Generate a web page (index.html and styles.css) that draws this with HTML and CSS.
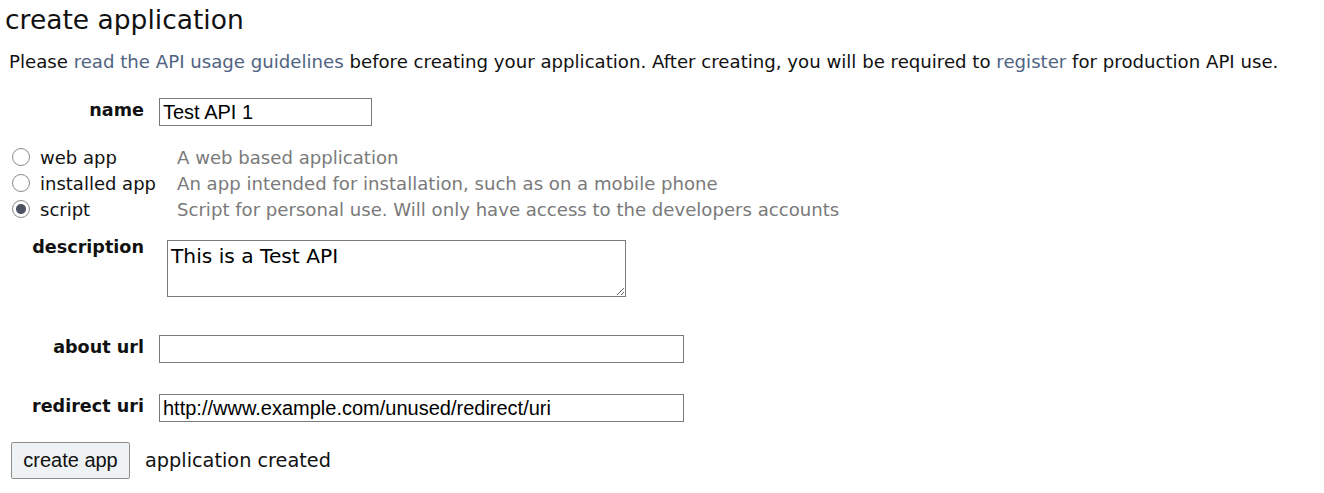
FILE: index.html
```html
<!DOCTYPE html>
<html>
<head>
<meta charset="utf-8">
<link rel="stylesheet" href="styles.css">
</head>
<body>
<div class="page">
  <h1 class="title">create application</h1>
  <p class="intro">Please <a class="link" href="#">read the API usage guidelines</a> before creating your application. After creating, you will be required to <a class="link" href="#">register</a> for production API use.</p>

  <div class="row row-name">
    <div class="label">name</div>
    <input class="field field-name" type="text" value="Test API 1">
  </div>

  <div class="apptypes">
    <div class="apptype">
      <label class="choice"><input class="radio" type="radio" name="type"><span>web app</span></label>
      <span class="hint">A web based application</span>
    </div>
    <div class="apptype">
      <label class="choice"><input class="radio" type="radio" name="type"><span>installed app</span></label>
      <span class="hint">An app intended for installation, such as on a mobile phone</span>
    </div>
    <div class="apptype">
      <label class="choice"><input class="radio" type="radio" name="type" checked><span>script</span></label>
      <span class="hint">Script for personal use. Will only have access to the developers accounts</span>
    </div>
  </div>

  <div class="row row-desc">
    <div class="label label-desc">description</div>
    <textarea class="area">This is a Test API</textarea>
  </div>

  <div class="row row-about">
    <div class="label">about url</div>
    <input class="field field-wide" type="text" value="">
  </div>

  <div class="row row-redirect">
    <div class="label">redirect uri</div>
    <input class="field field-wide" type="text" value="http://www.example.com/unused/redirect/uri">
  </div>

  <div class="actions">
    <button class="btn" type="button">create app</button>
    <span class="status">application created</span>
  </div>
</div>
</body>
</html>
```

FILE: styles.css
```css
html, body {
  margin: 0;
  padding: 0;
  background: #ffffff;
}

.page {
  font-family: "DejaVu Sans", Verdana, sans-serif;
  color: #111111;
}

.title {
  margin: 0;
  padding: 4px 0 0 5px;
  font-size: 26.5px;
  font-weight: normal;
  line-height: 32px;
  color: #111111;
}

.intro {
  margin: 14px 0 0 9px;
  font-size: 18.15px;
  line-height: 24px;
}

.link {
  color: #4f6482;
  text-decoration: none;
}

.row {
  display: flex;
  align-items: flex-start;
}

.label {
  width: 144px;
  text-align: right;
  font-weight: bold;
  font-size: 17.6px;
  line-height: 22px;
  padding-right: 15px;
  box-sizing: content-box;
}

.row-name {
  margin-top: 24px;
}
.row-name .label {
  padding-top: 1px;
}

.field {
  box-sizing: border-box;
  height: 28px;
  margin: 0;
  border: 1px solid #7a7a7a;
  border-radius: 0;
  padding: 0 3px;
  font-family: "Liberation Sans", Arial, sans-serif;
  font-size: 20px;
  color: #000000;
  background: #ffffff;
}

.field-name {
  width: 213px;
}

.field-wide {
  width: 525px;
}

.apptypes {
  margin-top: 18px;
  display: flex;
  flex-direction: column;
}

.apptype {
  display: flex;
  align-items: center;
  height: 26px;
}

.choice {
  display: flex;
  align-items: center;
  width: 177px;
  font-size: 18px;
}

.radio {
  -webkit-appearance: none;
  appearance: none;
  width: 18px;
  height: 18px;
  margin: 0 10px 0 12px;
  border: 1px solid #8a8a8a;
  border-radius: 50%;
  background: #ffffff;
  box-sizing: border-box;
}

.radio:checked {
  background: radial-gradient(circle, #4b5361 0, #4b5361 4.5px, #ffffff 5.5px);
}

.hint {
  color: #7a7a7a;
  font-size: 18.1px;
}

.row-desc {
  margin-top: 14px;
}
.label-desc {
  padding-right: 23px;
  padding-top: 0;
}

.area {
  box-sizing: border-box;
  width: 459px;
  height: 57px;
  margin: 4px 0 0 0;
  border: 1px solid #7a7a7a;
  padding: 3px 3px;
  font-family: "DejaVu Sans", Verdana, sans-serif;
  font-size: 20.2px;
  color: #000000;
  resize: both;
}

.row-about {
  margin-top: 38px;
}
.row-about .label,
.row-redirect .label {
  padding-top: 1px;
}

.row-redirect {
  margin-top: 31px;
}

.actions {
  display: flex;
  align-items: center;
  margin-top: 20px;
  padding-left: 11px;
}

.btn {
  box-sizing: border-box;
  width: 119px;
  height: 37px;
  margin: 0;
  border: 1px solid #8f8f8f;
  border-radius: 2px;
  background: #eef2f4;
  font-family: "Liberation Sans", Arial, sans-serif;
  font-size: 20px;
  color: #111111;
  padding: 0;
}

.status {
  margin-left: 15px;
  font-size: 19.3px;
}
```
